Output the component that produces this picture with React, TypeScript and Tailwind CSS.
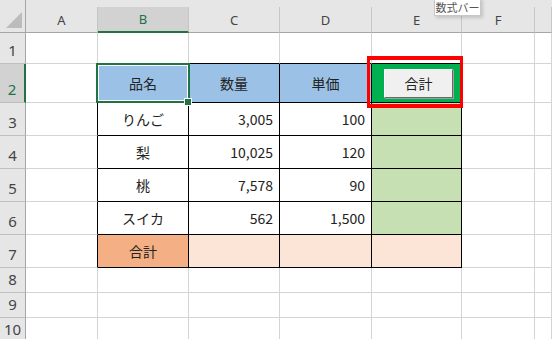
import React from 'react';

type Cell = { text?: string; align?: 'left' | 'center' | 'right'; button?: boolean };

const colLetters = ['A', 'B', 'C', 'D', 'E', 'F', ''];

// row number -> cells A..G
const body: Record<number, Cell[]> = {
  2: [{}, { text: '品名', align: 'center' }, { text: '数量', align: 'center' }, { text: '単価', align: 'center' }, { button: true }],
  3: [{}, { text: 'りんご', align: 'center' }, { text: '3,005', align: 'right' }, { text: '100', align: 'right' }],
  4: [{}, { text: '梨', align: 'center' }, { text: '10,025', align: 'right' }, { text: '120', align: 'right' }],
  5: [{}, { text: '桃', align: 'center' }, { text: '7,578', align: 'right' }, { text: '90', align: 'right' }],
  6: [{}, { text: 'スイカ', align: 'center' }, { text: '562', align: 'right' }, { text: '1,500', align: 'right' }],
  7: [{}, { text: '合計', align: 'center' }],
};

function cellBg(r: number, c: number) {
  if (r === 2 && c >= 1 && c <= 3) return 'bg-[#9bc2e6]';
  if (r === 2 && c === 4) return 'bg-[#00b050]';
  if (r >= 3 && r <= 6 && c === 4) return 'bg-[#c6e0b4]';
  if (r === 7 && c === 1) return 'bg-[#f4b084]';
  if (r === 7 && c >= 2 && c <= 4) return 'bg-[#fce4d6]';
  return 'bg-white';
}

function cellBorders(r: number, c: number) {
  const inTable = r >= 2 && r <= 7 && c >= 1 && c <= 4;
  const right = inTable || (c === 0 && r >= 2 && r <= 7) ? 'border-r-black' : 'border-r-[#d4d4d4]';
  const bottom = inTable || (r === 1 && c >= 1 && c <= 4) ? 'border-b-black' : 'border-b-[#d4d4d4]';
  return `${right} ${bottom}`;
}

function alignClass(a?: string) {
  if (a === 'center') return 'justify-center';
  if (a === 'right') return 'justify-end pr-[6px]';
  return 'justify-start pl-[4px]';
}

export default function App() {
  const rows = [1, 2, 3, 4, 5, 6, 7, 8, 9, 10];

  return (
    <div className="relative h-[339px] w-[552px] overflow-hidden bg-white font-['Noto_Sans_CJK_JP',sans-serif] text-[#222]">
      <div className="grid grid-cols-[26px_72px_91px_91px_92px_90px_73px_1fr] grid-rows-[33px_31px_39px_33px_33px_33px_33px_33px_25px_25px_25px]">
        {/* corner */}
        <div className="relative border-r border-b border-r-[#a6a6a6] border-b-[#a6a6a6] bg-[#e6e6e6]">
          <svg className="absolute left-0 top-0" width="25" height="32" viewBox="0 0 25 32">
            <polygon points="6,28 22,28 22,12" fill="#bcbcbc" />
          </svg>
        </div>

        {/* column headers */}
        {colLetters.map((l, i) => (
          <div key={l + i} className="flex flex-col bg-[#e6e6e6]">
            {i === 1 ? (
              <div className="mt-[7px] flex flex-1 items-center justify-center border-r border-b-2 border-r-[#c6c6c6] border-b-[#217346] bg-[#d2d2d2] pt-[2px] font-['Noto_Sans',sans-serif] text-[13px] text-[#217346]">
                {l}
              </div>
            ) : (
              <div className="mt-[7px] flex flex-1 items-center justify-center border-r border-b border-r-[#c6c6c6] border-b-[#a6a6a6] pt-[2px] font-['Noto_Sans',sans-serif] text-[13px] text-[#444]">
                {l}
              </div>
            )}
          </div>
        ))}

        {rows.map((r) => (
          <React.Fragment key={r}>
            {r === 2 ? (
              <div className="flex items-end justify-center border-r-2 border-b border-r-[#217346] border-b-[#bfbfbf] bg-[#d2d2d2] pb-[5px] font-['Noto_Sans',sans-serif] text-[15px] leading-none text-[#217346]">
                {r}
              </div>
            ) : (
              <div className="flex items-end justify-center border-r border-b border-r-[#a6a6a6] border-b-[#bfbfbf] bg-[#e6e6e6] pb-[5px] font-['Noto_Sans',sans-serif] text-[15px] leading-none text-[#444]">
                {r}
              </div>
            )}
            {colLetters.map((_, c) => {
              const cell = body[r]?.[c];
              return (
                <div
                  key={c}
                  className={`flex items-center border-r border-b text-[14px] ${cellBorders(r, c)} ${cellBg(r, c)} ${alignClass(cell?.align)}`}
                >
                  {cell?.button ? (
                    <div className="flex h-full w-full items-center justify-center px-[8px] py-[6px]">
                      <div className="flex h-[29px] w-[74px] items-center justify-center border border-t-white border-l-white border-r-[#696969] border-b-[#696969] bg-[#f0f0f0] text-[14px] shadow-[1px_1px_0_#a0a0a0]">
                        合計
                      </div>
                    </div>
                  ) : (
                    cell?.text
                  )}
                </div>
              );
            })}
          </React.Fragment>
        ))}
      </div>

      {/* selected cell B2 */}
      <div className="pointer-events-none absolute left-[96px] top-[63px] h-[40px] w-[94px] border-2 border-[#217346]">
        <div className="h-full w-full border border-white" />
      </div>
      <div className="absolute left-[185px] top-[99px] h-[6px] w-[6px] bg-[#217346] outline outline-1 outline-white" />

      {/* red highlight */}
      <div className="pointer-events-none absolute left-[367px] top-[56px] h-[52px] w-[96px] border-x-[3px] border-y-4 border-[#ff0000]" />

      {/* tooltip */}
      <div className="absolute left-[434px] top-[-2px] flex h-[18px] w-[47px] items-end justify-center overflow-visible whitespace-nowrap border border-[#c8c8c8] bg-white pb-[2px] text-[11px] leading-none text-[#555] shadow-[2px_2px_3px_rgba(0,0,0,0.15)]">
        数式バー
      </div>
    </div>
  );
}
